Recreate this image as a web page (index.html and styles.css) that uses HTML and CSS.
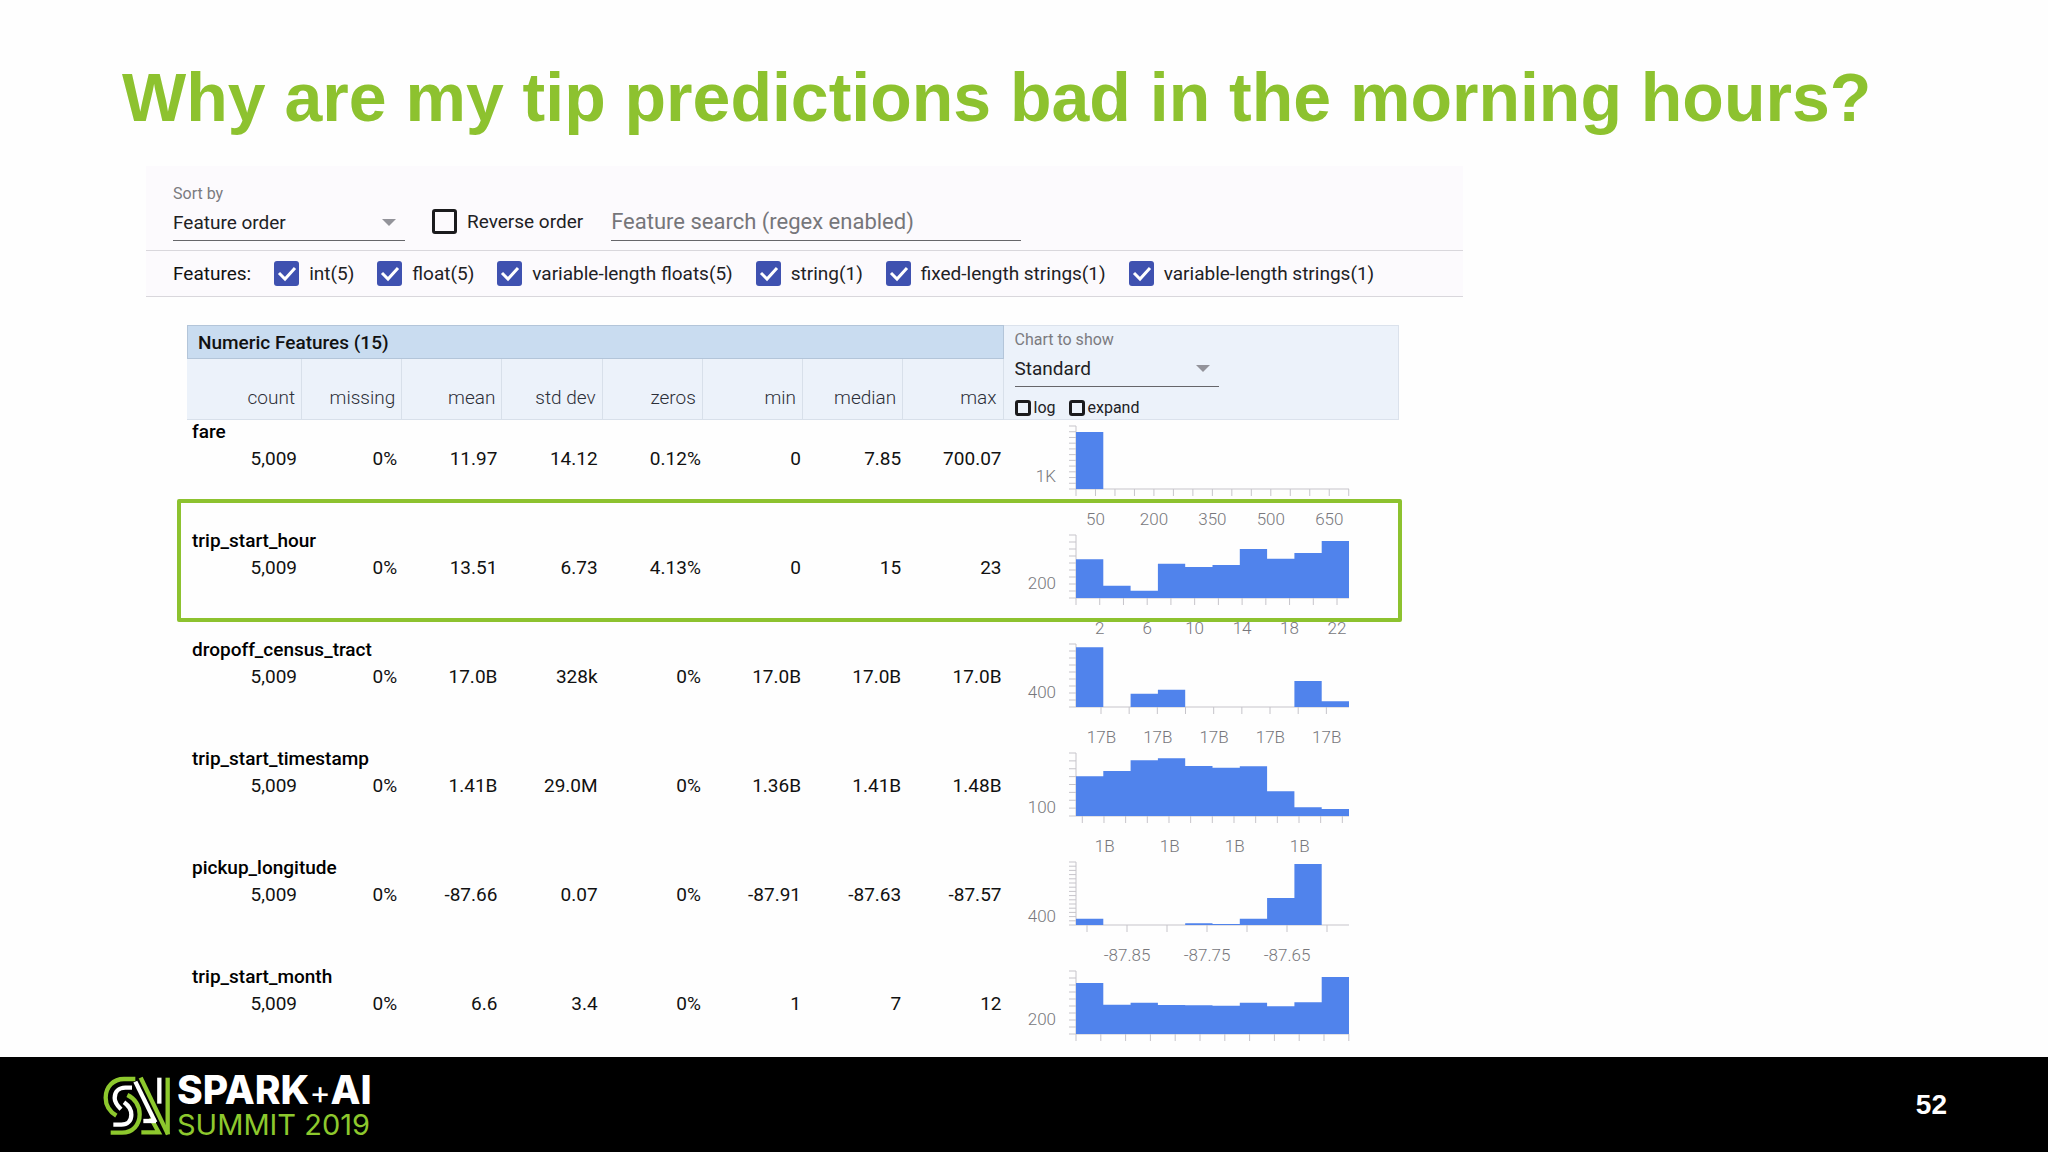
FILE: index.html
```html
<!doctype html>
<html lang="en">
<head>
  <meta charset="utf-8">
  <title>Why are my tip predictions bad in the morning hours?</title>
  <link rel="stylesheet" href="styles.css">
</head>
<body>
  <main class="slide">
    <h1>Why are my tip predictions bad in the morning hours?</h1>

    <section class="facets">
      <div class="toolbar">
        <div class="field">
          <label for="sort-by">Sort by</label>
          <select id="sort-by">
            <option>Feature order</option>
          </select>
        </div>
        <label class="check reverse"><input type="checkbox"> Reverse order</label>
        <input class="search" type="text" placeholder="Feature search (regex enabled)" aria-label="Feature search">
      </div>

      <div class="filters">
        <span class="filters-title">Features:</span>
        <label class="check"><input type="checkbox" checked> int(5)</label>
        <label class="check"><input type="checkbox" checked> float(5)</label>
        <label class="check"><input type="checkbox" checked> variable-length floats(5)</label>
        <label class="check"><input type="checkbox" checked> string(1)</label>
        <label class="check"><input type="checkbox" checked> fixed-length strings(1)</label>
        <label class="check"><input type="checkbox" checked> variable-length strings(1)</label>
      </div>

      <table class="stats">
        <colgroup>
          <col class="col-first">
          <col span="7">
          <col class="col-chart">
        </colgroup>
        <thead>
          <tr class="group">
            <th class="group-title" colspan="8">Numeric Features (15)</th>
            <td class="chart-options" rowspan="2">
              <div class="field">
                <label for="chart-type">Chart to show</label>
                <select id="chart-type">
                  <option>Standard</option>
                </select>
              </div>
              <div class="toggles">
                <label class="check small"><input type="checkbox"> log</label>
                <label class="check small"><input type="checkbox"> expand</label>
              </div>
            </td>
          </tr>
          <tr class="columns">
            <th>count</th><th>missing</th><th>mean</th><th>std dev</th>
            <th>zeros</th><th>min</th><th>median</th><th>max</th>
          </tr>
        </thead>
        <tbody>
          <tr class="name"><th colspan="8">fare</th><td class="chart" rowspan="2" data-chart="fare"></td></tr>
          <tr class="values"><td>5,009</td><td>0%</td><td>11.97</td><td>14.12</td><td>0.12%</td><td>0</td><td>7.85</td><td>700.07</td></tr>
        </tbody>
        <tbody class="highlight">
          <tr class="name"><th colspan="8">trip_start_hour</th><td class="chart" rowspan="2" data-chart="hour"></td></tr>
          <tr class="values"><td>5,009</td><td>0%</td><td>13.51</td><td>6.73</td><td>4.13%</td><td>0</td><td>15</td><td>23</td></tr>
        </tbody>
        <tbody>
          <tr class="name"><th colspan="8">dropoff_census_tract</th><td class="chart" rowspan="2" data-chart="tract"></td></tr>
          <tr class="values"><td>5,009</td><td>0%</td><td>17.0B</td><td>328k</td><td>0%</td><td>17.0B</td><td>17.0B</td><td>17.0B</td></tr>
        </tbody>
        <tbody>
          <tr class="name"><th colspan="8">trip_start_timestamp</th><td class="chart" rowspan="2" data-chart="timestamp"></td></tr>
          <tr class="values"><td>5,009</td><td>0%</td><td>1.41B</td><td>29.0M</td><td>0%</td><td>1.36B</td><td>1.41B</td><td>1.48B</td></tr>
        </tbody>
        <tbody>
          <tr class="name"><th colspan="8">pickup_longitude</th><td class="chart" rowspan="2" data-chart="longitude"></td></tr>
          <tr class="values"><td>5,009</td><td>0%</td><td>-87.66</td><td>0.07</td><td>0%</td><td>-87.91</td><td>-87.63</td><td>-87.57</td></tr>
        </tbody>
        <tbody>
          <tr class="name"><th colspan="8">trip_start_month</th><td class="chart" rowspan="2" data-chart="month"></td></tr>
          <tr class="values"><td>5,009</td><td>0%</td><td>6.6</td><td>3.4</td><td>0%</td><td>1</td><td>7</td><td>12</td></tr>
        </tbody>
      </table>
    </section>
  </main>

  <footer class="footer">
    <div class="brand">
      <svg class="brand-mark" viewBox="0 0 228 204" fill="none" stroke-width="13" aria-hidden="true">
        <g stroke="#8dc82d">
          <path d="M106 24H72C40 24 17 48 17 80C17 104 30 122 49 134"/>
          <path d="M82 72C104 82 119 104 119 130C119 162 98 185 66 185H32"/>
          <path d="M122 20L204 190"/>
          <path d="M203 20V190"/>
          <path d="M124 184H176L152 140"/>
        </g>
        <g stroke="#fff">
          <path d="M96 50H76C56 50 44 63 44 81C44 95 53 105 63 115"/>
          <path d="M72 94C86 104 94 116 94 131C94 150 82 161 64 161H40"/>
          <path d="M106 32L166 154"/>
          <path d="M130 150H168"/>
          <path d="M178 20V98"/>
        </g>
      </svg>
      <div class="brand-text">
        <div class="brand-top">SPARK<span>+</span>AI</div>
        <div class="brand-bottom">SUMMIT 2019</div>
      </div>
    </div>
    <div class="page-number">52</div>
  </footer>

  <script>
    // Bar heights and tick positions, in px inside the chart box
    const charts = {
      fare: { bars: [57, 0, 0, 0, 0, 0, 0, 0, 0, 0], yTicks: 11, yLabel: "1K", yPos: 56,
        xStart: 0, xStep: 19.48, xTicks: 15, labels: ["50", "200", "350", "500", "650"], labelStart: 19.5, labelStep: 58.45 },
      hour: { bars: [38.7, 12.3, 7.3, 34.3, 31, 33, 49, 39.3, 45, 57], yTicks: 9, yLabel: "200", yPos: 54,
        xStart: 0, xStep: 23.73, xTicks: 12, labels: ["2", "6", "10", "14", "18", "22"], labelStart: 23.7, labelStep: 47.46 },
      tract: { bars: [59.7, 0, 13.3, 17.3, 0, 0, 0, 0, 26, 5.7], yTicks: 9, yLabel: "400", yPos: 54,
        xStart: 25, xStep: 28.17, xTicks: 9, labels: ["17B", "17B", "17B", "17B", "17B"], labelStart: 25.5, labelStep: 56.3 },
      timestamp: { bars: [39.7, 45, 55.7, 57.7, 50, 48.3, 49.7, 24.7, 8.7, 7], yTicks: 8, yLabel: "100", yPos: 60,
        xStart: 6.3, xStep: 21.67, xTicks: 13, labels: ["1B", "1B", "1B", "1B"], labelStart: 28.7, labelStep: 65 },
      longitude: { bars: [6.3, 0, 0, 0, 1.7, 1, 6.3, 27, 61, 0], yTicks: 15, yLabel: "400", yPos: 60,
        xStart: 11, xStep: 40, xTicks: 7, labels: ["-87.85", "-87.75", "-87.65"], labelStart: 51, labelStep: 80 },
      month: { bars: [51, 29.3, 31.3, 29, 28.7, 28.3, 31.3, 27.7, 31.7, 57], yTicks: 9, yLabel: "200", yPos: 54,
        xStart: 0, xStep: 24.8, xTicks: 12, labels: [], labelStart: 0, labelStep: 0 }
    };

    const axisLeft = 72, axisTop = 6, axisBase = 69, barWidth = 27.3;

    function drawChart(c) {
      let axis = `M${axisLeft - 7} ${axisTop}H${axisLeft}V${axisBase}H${axisLeft + barWidth * 10}`;
      for (let i = 1; i <= c.yTicks; i++) {
        axis += `M${axisLeft - 7} ${axisTop + i * (axisBase - axisTop) / c.yTicks}h7`;
      }
      for (let i = 0; i < c.xTicks; i++) {
        axis += `M${axisLeft + c.xStart + i * c.xStep} ${axisBase}v7`;
      }
      let bars = `M${axisLeft} ${axisBase}`;
      c.bars.forEach(h => { bars += `V${axisBase - h}h${barWidth}`; });
      bars += `V${axisBase}Z`;
      const labels = c.labels.map((text, i) =>
        `<text x="${axisLeft + c.labelStart + i * c.labelStep}" y="105" text-anchor="middle">${text}</text>`).join("");
      return `<svg width="395" height="109">
        <path class="axis" d="${axis}"/>
        <path class="bars" d="${bars}"/>
        <text x="52" y="${c.yPos + 6}" text-anchor="end">${c.yLabel}</text>${labels}
      </svg>`;
    }

    document.querySelectorAll("[data-chart]").forEach(cell => {
      cell.innerHTML = drawChart(charts[cell.dataset.chart]);
    });
  </script>
</body>
</html>
```
FILE: styles.css
```css
* {
  box-sizing: border-box;
}

body {
  margin: 0;
  height: 100vh;
  display: flex;
  flex-direction: column;
  background: #fefefe;
  color: #111;
  font-family: Roboto, "Liberation Sans", sans-serif;
  font-size: 19px;
  overflow: hidden;
}

.slide {
  flex: 1;
  min-height: 0;
  overflow: hidden;
}

h1 {
  margin: 58px 0 30px 122px;
  font-family: "Liberation Sans", Arial, sans-serif;
  font-size: 68px;
  line-height: 78px;
  color: #8dc22f;
}

.facets {
  width: 64.3%;
  margin-left: 146px;
}

/* ========== Toolbar ========== */
.toolbar {
  display: flex;
  align-items: flex-end;
  height: 85px;
  padding: 0 27px 9px;
  background: #fcfafd;
  border-bottom: 1px solid #d9d7dc;
}

.field {
  display: flex;
  flex-direction: column;
}

.field label {
  font-size: 16px;
  line-height: 20px;
  color: #7b7b80;
}

select {
  appearance: none;
  height: 37px;
  padding: 0;
  border: 0;
  border-bottom: 1px solid #66666a;
  border-radius: 0;
  background: url("data:image/svg+xml,%3Csvg xmlns='http://www.w3.org/2000/svg' width='14' height='7'%3E%3Cpath d='M0 0h14L7 7z' fill='%2393939a'/%3E%3C/svg%3E") no-repeat right 9px center;
  color: #212124;
  font: inherit;
}

#sort-by {
  width: 232px;
}

.check {
  display: flex;
  align-items: center;
  gap: 10px;
  color: #212124;
  white-space: nowrap;
}

.check input {
  appearance: none;
  width: 25px;
  height: 25px;
  margin: 0;
  border: 3px solid #1b1b1d;
  border-radius: 3px;
}

.check input:checked {
  border: 0;
  background: #3f51b0 url("data:image/svg+xml,%3Csvg xmlns='http://www.w3.org/2000/svg' viewBox='0 0 25 25'%3E%3Cpath d='M5 12l6 6L21 7' fill='none' stroke='%23fff' stroke-width='3'/%3E%3C/svg%3E");
}

.reverse {
  margin: 0 28px 0 27px;
  padding-bottom: 7px;
}

.search {
  width: 410px;
  height: 39px;
  padding: 0;
  border: 0;
  border-bottom: 1px solid #66666a;
  background: none;
  font: inherit;
  font-size: 22px;
}

.search::placeholder {
  color: #76767a;
}

.filters {
  display: flex;
  align-items: center;
  gap: 23px;
  height: 46px;
  padding: 0 27px;
  background: #fcfafd;
  border-bottom: 1px solid #d9d7dc;
}

/* ========== Feature table ========== */
.stats {
  width: 92%;
  margin: 28px 0 0 41px;
  table-layout: fixed;
  border-collapse: separate;
  border-spacing: 0;
}

.col-first {
  width: 115px;
}

.col-chart {
  width: 395px;
}

.stats th,
.stats td {
  padding: 0;
  font-weight: 400;
  text-align: right;
}

.stats .group-title {
  height: 34px;
  padding-left: 10px;
  border: 1px solid #b3c5d9;
  background: #c9dcf0;
  font-weight: 500;
  text-align: left;
}

.stats .columns th {
  height: 61px;
  padding: 16px 6px 0 0;
  background: #ecf2fa;
  border-right: 1px solid #d8e0ea;
  border-bottom: 1px solid #d8e0ea;
  color: #2c2f38;
  font-weight: 300;
}

.stats .chart-options {
  padding: 4px 0 0 11px;
  background: #ecf2fa;
  border: 1px solid #dbe2ec;
  border-left: 0;
  text-align: left;
  vertical-align: top;
}

#chart-type {
  width: 204px;
}

.toggles {
  display: flex;
  gap: 13px;
  margin-top: 11px;
}

.check.small {
  gap: 3px;
  font-size: 16px;
  line-height: 20px;
}

.check.small input {
  width: 16px;
  height: 16px;
}

.stats .name th {
  height: 24px;
  padding: 2px 0 0 5px;
  color: #000;
  font-weight: 500;
  line-height: 20px;
  text-align: left;
  vertical-align: top;
}

.stats .values td {
  height: 85px;
  padding: 4px 2px 0 0;
  line-height: 22px;
  vertical-align: top;
}

.stats .values td:nth-child(-n+4) {
  padding-right: 5px;
}

.chart svg {
  display: block;
}

.chart text {
  fill: #77777c;
  font-size: 17px;
  font-weight: 300;
}

.axis {
  fill: none;
  stroke: #c6c4ca;
  stroke-width: 1;
}

.bars {
  fill: #5083ec;
}

/* Green frame around the feature under discussion */
.highlight {
  position: relative;
}

.highlight::after {
  content: "";
  position: absolute;
  inset: -30px -3px 16px -10px;
  border: 4px solid #8dc22f;
  border-radius: 2px;
}

/* ========== Footer ========== */
.footer {
  display: flex;
  align-items: center;
  justify-content: space-between;
  height: 95px;
  padding: 0 101px 0 100px;
  background: #000;
  color: #fff;
}

.brand {
  display: flex;
  align-items: center;
  gap: 1px;
}

.brand-mark {
  width: 76px;
  height: 68px;
}

.brand-text {
  font-family: Inter, "Liberation Sans", sans-serif;
}

.brand-top {
  padding-top: 3px;
  font-size: 39px;
  font-weight: 800;
  line-height: 34px;
}

.brand-top span {
  font-size: 32px;
  font-weight: 400;
}

.brand-bottom {
  color: #8dc82d;
  font-size: 29px;
  line-height: 30px;
}

.page-number {
  font-family: "Liberation Sans", Arial, sans-serif;
  font-size: 28px;
  font-weight: 700;
}
```
